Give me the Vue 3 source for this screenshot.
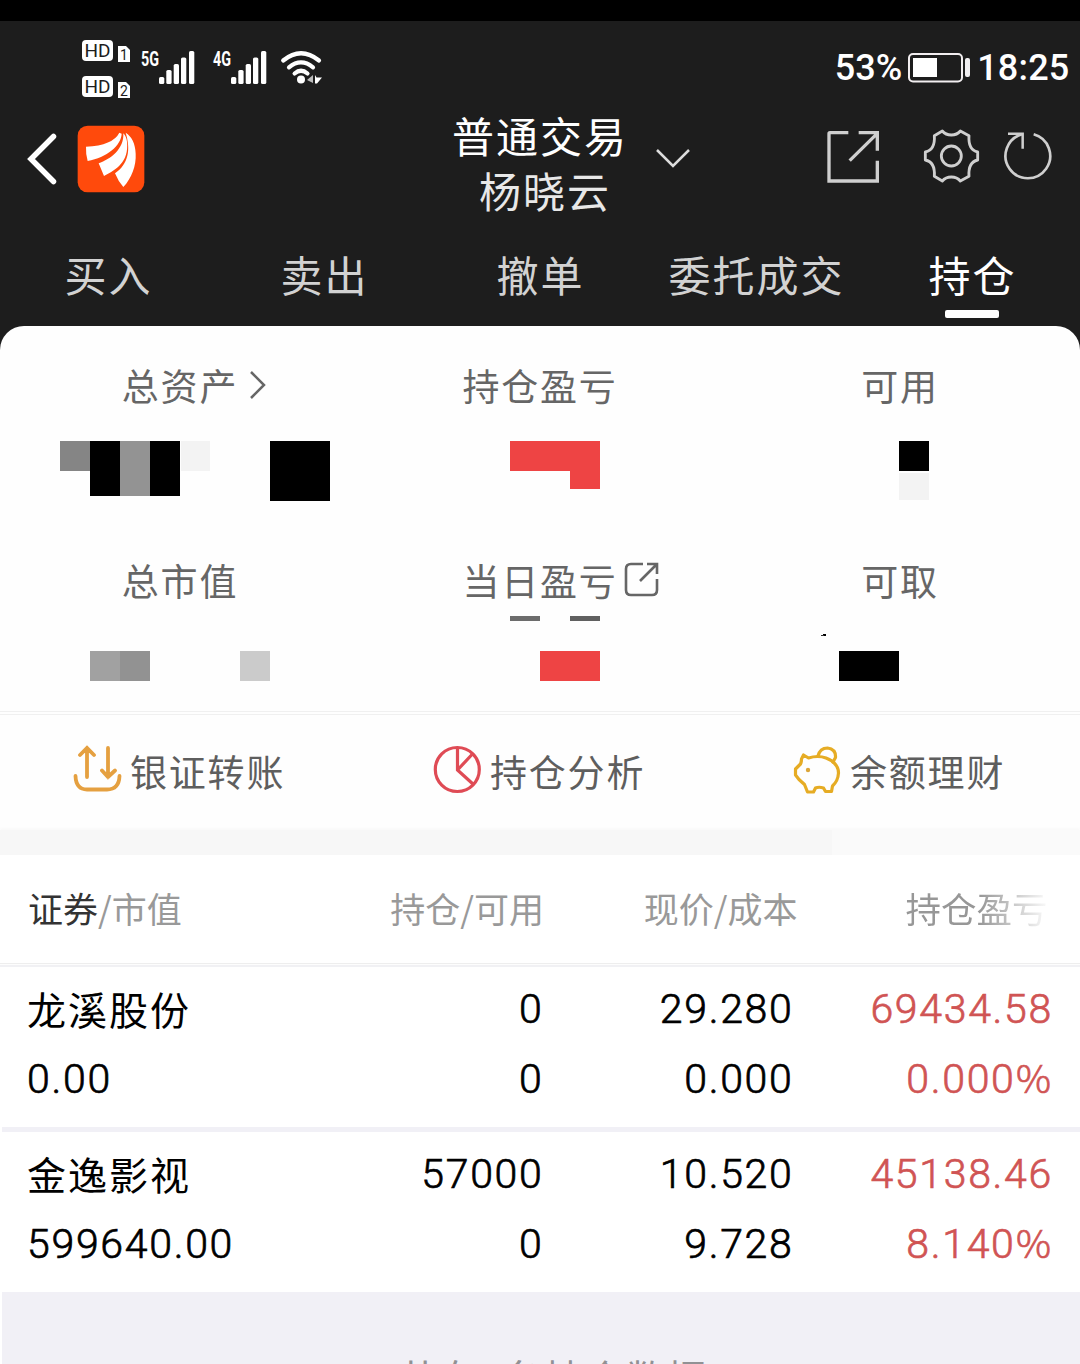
<script setup>
const tabs = [
  { text: '买入' },
  { text: '卖出' },
  { text: '撤单' },
  { text: '委托成交' },
  { text: '持仓', active: true },
]

// Masked amounts: blocks are [x, y, width, height, fill] inside a 360-wide cell
const summary = [
  {
    label: '总资产', icon: 'chevron',
    blocks: [
      [60, 10, 30, 30, '#858585'], [90, 10, 30, 55, '#000'], [120, 10, 30, 55, '#939393'],
      [150, 10, 30, 55, '#000'], [181, 10, 29, 30, '#f3f3f3'], [270, 10, 60, 60, '#000'],
    ],
  },
  { label: '持仓盈亏', blocks: [[150, 10, 90, 30, '#ee4444'], [210, 39, 30, 19, '#ee4444']] },
  { label: '可用', blocks: [[179, 10, 30, 30, '#000'], [179, 42, 30, 27, '#f3f3f3']] },
  {
    label: '总市值',
    blocks: [[90, 46, 30, 30, '#a1a1a1'], [120, 46, 30, 30, '#929292'], [240, 46, 30, 30, '#cbcbcb']],
  },
  {
    label: '当日盈亏', icon: 'export',
    blocks: [[150, 11, 30, 5, '#6c6c6c'], [210, 11, 30, 5, '#606060'], [180, 46, 60, 30, '#ee4444']],
  },
  { label: '可取', blocks: [[103, 29, 3, 2, '#000'], [101, 30, 3, 1, '#333'], [119, 46, 60, 30, '#000']] },
]

const actions = [
  { text: '银证转账', icon: 'transfer' },
  { text: '持仓分析', icon: 'pie' },
  { text: '余额理财', icon: 'pig' },
]

const holdings = [
  { name: '龙溪股份', value: '0.00', qty: '0', avail: '0', price: '29.280', cost: '0.000', gain: '69434.58', rate: '0.000' },
  { name: '金逸影视', value: '599640.00', qty: '57000', avail: '0', price: '10.520', cost: '9.728', gain: '45138.46', rate: '8.140' },
]

const networks = ['5G', '4G']
const bars = [[12, 26, 7], [19.3, 19, 14], [26.7, 13, 20], [34, 6.5, 26.5], [42, 0, 33]]
</script>

<template>
  <div class="screen">
    <div class="notch"></div>
    <header class="top">
      <div class="status">
        <svg class="sims" width="50" height="60" viewBox="81 39 50 60">
          <g v-for="n in 2" :key="n" :transform="`translate(0 ${(n - 1) * 36})`">
            <rect x="82" y="40" width="31" height="21" rx="4" fill="#fff" />
            <text x="84.500" y="57.300" font-size="19" textLength="26" fill="#1d1d1d">HD</text>
            <path d="M118 46h8l4 4v12h-12z" fill="#fff" />
            <text x="120" y="59.5" font-size="14" textLength="7" fill="#1d1d1d">{{ n }}</text>
          </g>
        </svg>
        <svg v-for="net in networks" :key="net" class="signal" width="54" height="34" viewBox="0 0 54 34">
          <text x="0" y="14.5" font-size="20" font-weight="700" textLength="18" lengthAdjust="spacingAndGlyphs" fill="#fff">{{ net }}</text>
          <rect v-for="b in bars" :key="b[0]" :x="b[0] + 6" :y="b[1]" width="5.3" :height="b[2]" rx="1.6" fill="#fff" />
        </svg>
        <svg class="wifi" width="42" height="36" viewBox="280 50 42 36">
          <g fill="none" stroke="#fff" stroke-width="4.2" stroke-linecap="round">
            <path d="M283.200 60.500Q301 46 319 60.500" />
            <path d="M289 67.300Q301 57.500 313 67.300" />
            <path d="M294.600 73.500Q301 68 307.500 73.500" />
          </g>
          <circle cx="301" cy="79.500" r="4" fill="#fff" />
          <path d="M313 75v8l-6-3z" fill="#bbb" />
          <path d="M315 75l1.500 2.500h5.500l-5 6h-2z" fill="#fff" />
        </svg>
        <div class="power">
          <span class="pct">53%</span>
          <svg width="63" height="30" viewBox="0 0 63 30">
            <rect x="1" y="1" width="53" height="27.500" rx="4" fill="none" stroke="#f2eef0" stroke-width="2" />
            <rect x="5" y="5" width="24" height="19" fill="#fff" />
            <rect x="57" y="5" width="5" height="19" rx="2" fill="#f0eef0" />
          </svg>
          <span class="clock">18:25</span>
        </div>
      </div>

      <div class="nav">
        <svg class="back" width="34" height="54" viewBox="0 0 34 54">
          <path d="M27.500 4.500L5 27l22.500 22.500" fill="none" stroke="#fff" stroke-width="5.500" stroke-linecap="round" />
        </svg>
        <svg class="logo" width="68" height="68" viewBox="230 375 204 204">
          <rect x="232" y="377" width="200" height="200" rx="30" fill="#ff4a0c" />
          <g fill="#fff">
            <path d="M257 440Q338 436 357 398L364 401C362 437 320 472 262 483Q256 462 257 440Z" />
            <path d="M369 400C372 447 330 478 295 490L311 528C348 508 386 486 380 425Q377 407 369 400Z" />
            <path d="M376 398C392 450 384 492 344 520Q353 543 369 561C394 535 408 496 406 461C405 430 394 409 376 398Z" />
          </g>
        </svg>
        <div class="titles">
          <div class="title">普通交易</div>
          <div class="owner">杨晓云</div>
        </div>
        <svg class="caret" width="36" height="22" viewBox="0 0 36 22">
          <path d="M2 3l16 16L34 3" fill="none" stroke="#ddd" stroke-width="2.500" />
        </svg>
        <svg class="tools" width="230" height="60" viewBox="135 318 690 180">
          <g fill="none" stroke="#cfcfcf">
            <path d="M205 338H150Q147 338 147 341V483H292V422M236 338H292V392M292 340L209 422" stroke-width="10" />
            <path d="M487 333L463 347C465 375 455 392 436 396V420C455 424 465 441 463 469L487 483C500 467 528 467 541 483L567 469C565 441 575 424 593 420V396C575 392 565 375 567 347L541 333C528 349 500 349 487 333Z" stroke-width="8.500" stroke-linejoin="round" />
            <circle cx="514" cy="408" r="30" stroke-width="8.500" />
            <path d="M761 343A67 67 0 1 1 726 343" stroke-width="8" />
            <path d="M684 341H728V386" stroke-width="7.500" />
          </g>
        </svg>
      </div>

      <nav class="tabs">
        <div v-for="t in tabs" :key="t.text" class="tab" :class="{ active: t.active }">
          <span>{{ t.text }}</span>
        </div>
      </nav>
    </header>

    <section class="panel">
      <div class="summary">
        <div v-for="cell in summary" :key="cell.label" class="cell">
          <div class="label">
            <span>{{ cell.label }}</span>
            <svg v-if="cell.icon === 'chevron'" class="more" width="20" height="30" viewBox="0 0 20 30">
              <path d="M3 2l13 13L3 28" fill="none" stroke="#666" stroke-width="2.500" />
            </svg>
            <svg v-if="cell.icon === 'export'" class="open" width="36" height="36" viewBox="0 0 36 36">
              <path d="M19 2H7Q2 2 2 7V28Q2 33 7 33H28Q33 33 33 28V17M23 2H33V12M33 2L16 19" fill="none" stroke="#666" stroke-width="2.600" />
            </svg>
          </div>
          <svg class="mask" width="360" height="80" viewBox="0 0 360 80" shape-rendering="crispEdges">
            <rect v-for="(b, i) in cell.blocks" :key="i" :x="b[0]" :y="b[1]" :width="b[2]" :height="b[3]" :fill="b[4]" />
          </svg>
        </div>
      </div>

      <div class="actions">
        <div v-for="a in actions" :key="a.text" class="action">
          <svg v-if="a.icon === 'transfer'" width="48" height="48" viewBox="73 746 48 48">
            <g fill="none" stroke="#e5a040" stroke-width="3.800" stroke-linecap="round">
              <path d="M87 777V749M80 755l7-7 7 7M108 748v29M102 770.500l6 6.500 7-6.500" />
              <path d="M75.500 776Q76 789.500 87 789.500H107Q119 789.500 119.500 776" />
            </g>
          </svg>
          <svg v-else-if="a.icon === 'pie'" width="48" height="48" viewBox="433 746 48 48">
            <g fill="none" stroke="#df4b55" stroke-width="3.200">
              <circle cx="457.300" cy="769.500" r="22" />
              <path d="M457.500 748V770L473.500 784.500M457.500 770L472 754.500" />
            </g>
          </svg>
          <svg v-else width="48" height="48" viewBox="793 746 48 48">
            <g fill="none" stroke="#e6ac24" stroke-width="3.200" stroke-linejoin="round" stroke-linecap="round">
              <path d="M818 756Q820 748 827.500 748Q836 749 835.500 757.500L833 762" />
              <path d="M803.500 755L808.500 758Q818 755 826 758Q838.500 763 838.500 773Q838 781 832.500 786L831.500 791.500H825.500L823.500 788Q819 786.500 815.500 788L813.500 792H807.500L804.500 784.500L799 779.500L795.500 775V769L800.500 764Q801.500 762 801.500 759Z" />
            </g>
            <circle cx="808" cy="770" r="2.200" fill="#dca63a" />
          </svg>
          <span>{{ a.text }}</span>
        </div>
      </div>
    </section>

    <div class="band"><i></i></div>

    <section class="table">
      <div class="thead row">
        <span><b>证券</b>/市值</span>
        <span>持仓/可用</span>
        <span>现价/成本</span>
        <span class="fade">持仓盈亏</span>
      </div>
      <div class="rule"></div>
      <div v-for="h in holdings" :key="h.name" class="item">
        <div class="row line">
          <span class="name">{{ h.name }}</span><span>{{ h.qty }}</span><span>{{ h.price }}</span><span class="up">{{ h.gain }}</span>
        </div>
        <div class="row line">
          <span>{{ h.value }}</span><span>{{ h.avail }}</span><span>{{ h.cost }}</span><span class="up">{{ h.rate }}<i>%</i></span>
        </div>
      </div>
    </section>

    <footer class="foot">共有2条持仓数据</footer>
  </div>
</template>

<style>
body { margin: 0; background: #fff; }
</style>

<style scoped>
.screen {
  width: 1080px;
  height: 1364px;
  overflow: hidden;
  display: flex;
  flex-direction: column;
  background: #fff;
  font-family: Roboto, "Noto Sans CJK SC", sans-serif;
  white-space: nowrap;
}
svg { display: block; flex: none; overflow: visible; }
.notch { height: 21px; background: #000; flex: none; }
.top { height: 335px; flex: none; background: #1d1d1d; }
.status { display: flex; height: 85px; align-items: flex-start; padding-left: 81px; }
.sims { margin-top: 18px; }
.signal { margin: 30px 0 0 10px; }
.signal + .signal { margin-left: 18px; }
.wifi { margin: 29px 0 0 13px; }
.power { display: flex; margin: 26px 10.5px 0 auto; height: 42px; align-items: center; color: #fff; font-size: 36px; font-weight: 500; }
.pct { margin-right: 5.5px; }
.clock { margin-left: 6.5px; letter-spacing: 0.2px; }
.nav { display: flex; height: 120px; }
.back { margin: 26px 0 0 26px; }
.logo { margin: 19px 0 0 17px; }
.titles { width: 200px; margin-left: 297px; text-align: center; font-size: 42px; letter-spacing: 2px; color: #fff; padding-top: 1px; font-family: "Noto Sans CJK SC", sans-serif; }
.title { height: 55px; line-height: 56px; padding-right: 4px; }
.owner { height: 56px; line-height: 56px; color: #e8e8e8; padding-left: 6px; }
.caret { margin: 41px 0 0 13px; }
.tools { margin: 20px 0 0 134px; }
.tabs { display: flex; height: 100px; color: #d2d2d2; font-size: 42px; font-family: "Noto Sans CJK SC", sans-serif; }
.tab { width: 216px; display: flex; flex-direction: column; align-items: center; padding-top: 18px; }
.tab span { height: 60px; line-height: 60px; letter-spacing: 2px; margin-right: -1px; }
.tab.active { color: #fff; }
.tab.active::after { content: ""; width: 54px; height: 8px; border-radius: 2px; background: #fff; margin-top: 6px; }
.panel { height: 504px; margin-top: -30px; flex: none; border-radius: 24px 24px 0 0; background: #fefefe; }
.summary { display: grid; grid-template-columns: repeat(3, 360px); grid-template-rows: 174px 211px; height: 385px; }
.cell { padding-top: 30px; }
.cell .mask { margin-top: 17px; }
.cell:nth-child(n + 4) { padding-top: 51px; }
.cell:nth-child(n + 4) .mask { margin-top: -4px; }
.label { position: relative; width: max-content; height: 58px; line-height: 58px; margin: 0 auto; font-size: 37px; letter-spacing: 1.8px; color: #666; font-family: "Noto Sans CJK SC", sans-serif; }
.more { position: absolute; left: 100%; top: 14px; margin-left: 10px; }
.open { position: absolute; left: 100%; top: 11px; margin-left: 6px; }
.actions { display: flex; height: 115px; border-top: 1px solid #f0f0f0; color: #5e5e5e; font-size: 37px; letter-spacing: 1.8px; font-family: "Noto Sans CJK SC", sans-serif; box-shadow: inset 0 2px #fefefe, inset 0 3px #f0f0f0; }
.action { width: 287px; padding-left: 73px; height: 115px; display: flex; align-items: center; gap: 9px; }
.action svg { margin-top: 1px; }
.action span { line-height: 58px; margin-top: 2px; }
.band { height: 25px; flex: none; background: #f7f7f7; display: flex; justify-content: flex-end; box-shadow: 0 -2px 2px #fafafa; }
.band i { width: 248px; background: #fafafa; }
.table { flex: none; color: #000; }
.row { display: grid; grid-template-columns: 301.5px 215px 250px 259.5px; padding-left: 27px; }
.row > span + span { text-align: right; }
.thead { height: 108px; line-height: 106px; grid-template-columns: 300px 216px 253.5px 249px; padding-left: 28px; font-size: 35px; color: #999; font-family: "Noto Sans CJK SC", sans-serif; }
.thead b { font-weight: 400; color: #333; }
.thead .fade { justify-self: end; font-size: 35.5px; margin-right: -1px; background: linear-gradient(90deg, #979797 52%, #fff 102%); background-clip: text; color: transparent; }
.rule { height: 4px; background: linear-gradient(#eee 0 1px, #fdfdfd 1px 2px, #f1f1f4 2px); }
.item { padding: 7px 0 13px; }
.item + .item { border-top: 5px solid #f1f0f6; margin-left: 2px; }
.item + .item .row { padding-left: 25px; }
.line { height: 70px; line-height: 70px; font-size: 41px; font-weight: 300; letter-spacing: 1.7px; -webkit-text-stroke: 0.7px currentColor; }
.name { font-family: "Noto Sans CJK SC", sans-serif; font-size: 39px; line-height: 68px; font-weight: 400; letter-spacing: 2px; -webkit-text-stroke: 0; }
.up { color: #d05454; }
.up i { font-family: "Noto Sans CJK SC", sans-serif; font-style: normal; font-size: 39px; line-height: 1; letter-spacing: 2px; margin-left: 0.5px; }
.foot { height: 72px; flex: none; margin-left: 2px; background: #f1f0f6; text-align: center; font-size: 39.5px; line-height: 58px; padding-top: 56px; box-sizing: border-box; letter-spacing: 1.4px; color: #919194; padding-left: 24px; font-family: "Noto Sans CJK SC", sans-serif; }
</style>
